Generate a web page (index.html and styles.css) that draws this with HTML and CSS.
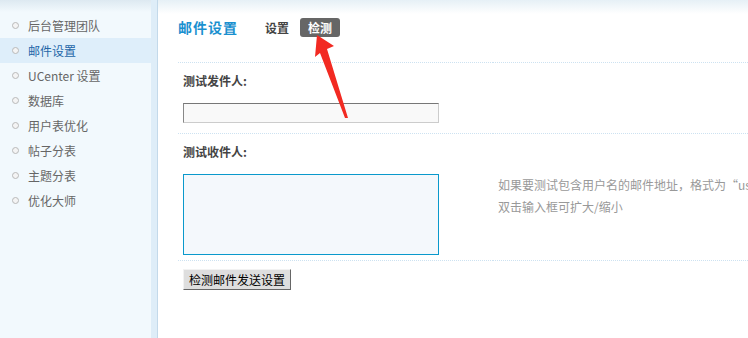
FILE: index.html
```html
<!DOCTYPE html>
<html lang="zh-CN">
<head>
<meta charset="utf-8">
<title>邮件设置</title>
<link rel="stylesheet" href="styles.css">
</head>
<body>
<div class="frame">
  <aside class="side">
    <ul class="menu">
      <li><span class="dot"></span>后台管理团队</li>
      <li class="on"><span class="dot"></span>邮件设置</li>
      <li><span class="dot"></span>UCenter 设置</li>
      <li><span class="dot"></span>数据库</li>
      <li><span class="dot"></span>用户表优化</li>
      <li><span class="dot"></span>帖子分表</li>
      <li><span class="dot"></span>主题分表</li>
      <li><span class="dot"></span>优化大师</li>
    </ul>
  </aside>
  <div class="strip"></div>
  <main class="main">
    <div class="itemtitle">
      <h3>邮件设置</h3>
      <a class="tab">设置</a>
      <a class="tab current">检测</a>
    </div>
    <table class="tb">
      <colgroup><col class="col1"><col class="col2"></colgroup>
      <tr class="lbl"><td colspan="2">测试发件人:</td></tr>
      <tr class="fld fld1">
        <td><input class="txt" type="text"></td>
        <td></td>
      </tr>
      <tr class="lbl"><td colspan="2">测试收件人:</td></tr>
      <tr class="fld fld2">
        <td><textarea class="area"></textarea></td>
        <td class="tips"><span class="nw">如果要测试包含用户名的邮件地址，格式为“username &lt;user@domain.com&gt;” 。多个邮件地址用逗号分隔</span><br>双击输入框可扩大/缩小</td>
      </tr>
      <tr class="btnrow"><td colspan="2"><button class="btn" type="button">检测邮件发送设置</button></td></tr>
    </table>
  </main>
</div>
<svg class="arrow" viewBox="0 0 748 338" width="748" height="338" aria-hidden="true">
  <polygon points="317,35 334,46 327,49 348,118 345,118 320,53 315,57" fill="#f22a22"/>
</svg>
</body>
</html>
```
FILE: styles.css
```css
html, body {
  margin: 0;
  padding: 0;
  width: 748px;
  height: 338px;
  overflow: hidden;
  background: #fff;
  font-family: "Noto Sans CJK SC", "Liberation Sans", sans-serif;
  font-size: 12px;
  color: #333;
}
.frame {
  display: flex;
  height: 338px;
}
.side {
  width: 151px;
  flex: none;
  background: linear-gradient(#dde9f1, #f2f9fd 12px);
}
.menu {
  list-style: none;
  margin: 0;
  padding: 13px 0 0;
}
.menu li {
  height: 25px;
  line-height: 25px;
  display: flex;
  align-items: center;
  color: #666;
  white-space: nowrap;
}
.menu li.on {
  background: #deeefa;
  color: #2366a8;
}
.dot {
  width: 5px;
  height: 5px;
  border: 1px solid #b9b9b9;
  border-radius: 50%;
  background: #f4f4f4;
  margin: 0 9px 0 12px;
  flex: none;
}
.strip {
  width: 6px;
  flex: none;
  background: #deedf8;
  border-right: 1px solid #c3d9ea;
}
.main {
  flex: 1;
  min-width: 0;
  padding-left: 20px;
  background: linear-gradient(#e6f0f6, #fff 14px);
  overflow: hidden;
}
.itemtitle {
  height: 62px;
  box-sizing: border-box;
  padding-top: 18px;
  display: flex;
  align-items: flex-start;
}
.itemtitle h3 {
  margin: 0 27px 0 0;
  height: 19px;
  line-height: 19px;
  font-size: 14px;
  font-weight: bold;
  letter-spacing: 1px;
  color: #1a90cf;
}
.tab {
  height: 19px;
  line-height: 19px;
  font-weight: bold;
  color: #444;
  margin-right: 11px;
}
.tab.current {
  background: #666;
  color: #fff;
  border-radius: 3px;
  padding: 0 8px;
}
.tb {
  border-collapse: collapse;
  table-layout: fixed;
  width: 570px;
}
.col1 {
  width: 315px;
}
.col2 {
  width: 255px;
}
.tb td {
  padding: 0 5px;
  vertical-align: top;
}
.lbl td {
  border-top: 1px dotted #cde2f1;
  padding: 9px 5px 8px;
  line-height: 18px;
  font-weight: bold;
  color: #444;
}
.fld1 td {
  padding: 5px 5px 10px;
}
.fld2 td {
  padding: 5px 5px 5px;
}
.txt {
  display: block;
  box-sizing: border-box;
  width: 256px;
  height: 20px;
  margin: 0;
  padding: 0 2px;
  border: 1px solid;
  border-color: #777 #ccc #ccc #888;
  background: #f9f9f9;
}
.area {
  display: block;
  box-sizing: border-box;
  width: 256px;
  height: 81px;
  margin: 0;
  padding: 2px;
  border: 1px solid #0a99cc;
  background: #f4f8fc;
  resize: none;
}
.tips {
  color: #999;
  line-height: 22px;
  overflow: visible;
}
.nw {
  white-space: nowrap;
}
.btnrow td {
  border-top: 1px dotted #cde2f1;
  padding: 8px 5px;
}
.btn {
  display: block;
  height: 21px;
  margin: 0;
  padding: 0 5px;
  font-family: "Noto Sans CJK SC", "Liberation Sans", sans-serif;
  font-size: 12px;
  line-height: 19px;
  color: #000;
  background: #dedede;
  border: 1px solid;
  border-color: #f2f2f2 #666 #666 #f2f2f2;
}
.arrow {
  position: absolute;
  left: 0;
  top: 0;
  pointer-events: none;
}
```
